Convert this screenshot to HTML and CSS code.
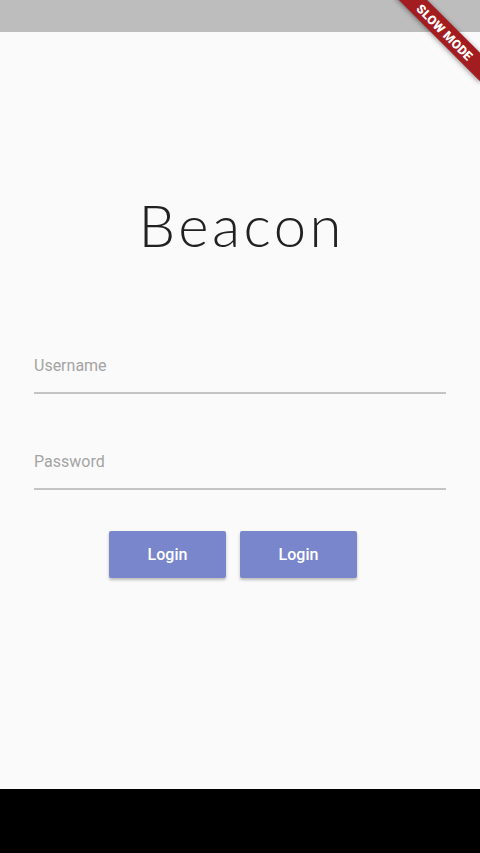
FILE: index.html
```html
<!DOCTYPE html>
<html>
<head>
<meta charset="utf-8">
<link rel="stylesheet" href="styles.css">
</head>
<body>
<div class="screen">
  <div class="statusbar"></div>
  <main class="content">
    <h1 class="title">Beacon</h1>
    <div class="field"><span class="placeholder">Username</span></div>
    <div class="field"><span class="placeholder">Password</span></div>
    <div class="actions">
      <button class="btn">Login</button>
      <button class="btn">Login</button>
    </div>
  </main>
  <div class="navbar"></div>
  <div class="banner"><span>SLOW MODE</span></div>
</div>
</body>
</html>
```
FILE: styles.css
```css
html, body {
  margin: 0;
  padding: 0;
}
body {
  font-family: Roboto, "Liberation Sans", sans-serif;
  background: #000;
}
.screen {
  position: relative;
  width: 480px;
  height: 853px;
  overflow: hidden;
  display: flex;
  flex-direction: column;
}
.statusbar {
  height: 32px;
  background: #bdbdbd;
  flex: none;
}
.content {
  flex: 1;
  background: #fafafa;
  display: flex;
  flex-direction: column;
  padding: 0 34px;
}
.title {
  margin: 158px 0 0;
  font-family: Lato, sans-serif;
  font-weight: 300;
  font-size: 58px;
  line-height: 70px;
  text-align: center;
  color: #212121;
  letter-spacing: 3.5px;
  padding-left: 3.5px;
}
.field {
  height: 50px;
  border-bottom: 2px solid #c4c4c4;
  display: flex;
  align-items: center;
}
.title + .field {
  margin-top: 82px;
}
.field + .field {
  margin-top: 44px;
}
.placeholder {
  font-size: 16px;
  color: #a4a4a4;
  margin-top: -3px;
}
.actions {
  display: flex;
  justify-content: center;
  gap: 14px;
  margin-top: 41px;
  padding-right: 14px;
}
.btn {
  width: 117px;
  height: 47px;
  border: none;
  border-radius: 2px;
  background: #7986cb;
  color: #fff;
  font-family: Roboto, sans-serif;
  font-weight: 500;
  font-size: 16px;
  box-shadow: 0 2px 3px rgba(0,0,0,0.25);
  padding: 0;
}
.navbar {
  height: 64px;
  background: #000;
  flex: none;
}
.banner {
  position: absolute;
  top: 22px;
  right: -25px;
  width: 120px;
  height: 20px;
  background: #a31c20;
  transform: rotate(45deg);
  display: flex;
  align-items: center;
  justify-content: center;
  box-shadow: 0 1px 5px rgba(0,0,0,0.45);
}
.banner span {
  color: #fff;
  font-family: Roboto, sans-serif;
  font-weight: 900;
  font-size: 12.5px;
  letter-spacing: 0.2px;
}
```
